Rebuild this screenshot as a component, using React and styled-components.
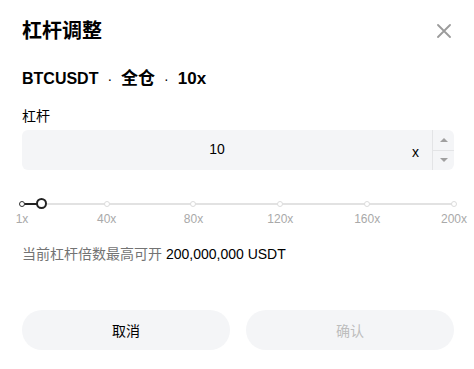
import React, { useState } from "react";
import styled, { createGlobalStyle } from "styled-components";

const GlobalStyle = createGlobalStyle`
  html, body {
    margin: 0;
    padding: 0;
    background: #fff;
  }
  body {
    font-family: "Liberation Sans", "Noto Sans CJK SC", sans-serif;
    color: #000;
  }
`;

const Modal = styled.div`
  width: 474px;
  box-sizing: border-box;
  padding: 17px 20px 0 22px;
`;

const Header = styled.div`
  display: flex;
  align-items: center;
  justify-content: space-between;
  height: 28px;
`;

const Title = styled.h2`
  margin: 0;
  font-size: 20px;
  line-height: 28px;
  font-weight: 700;
`;

const CloseBtn = styled.button`
  border: 0;
  background: none;
  padding: 0;
  width: 16px;
  height: 16px;
  display: flex;
  align-items: center;
  justify-content: center;
  cursor: pointer;
  margin-right: 2px;
`;

const Subtitle = styled.div`
  margin-top: 22px;
  font-size: 16px;
  line-height: 24px;
  font-weight: 700;
  display: flex;
  align-items: center;
  gap: 9px;
`;

const Dot = styled.span`
  font-weight: 400;
  font-size: 14px;
`;

const Lev = styled.span`
  font-size: 17px;
`;

const Label = styled.div`
  margin-top: 15px;
  font-size: 14px;
  line-height: 20px;
`;

const InputBox = styled.div`
  margin-top: 4px;
  height: 40px;
  width: 432px;
  display: flex;
  align-items: stretch;
  background: #f4f5f7;
  border-radius: 6px;
  overflow: hidden;
`;

const NumInput = styled.input`
  flex: 1;
  min-width: 0;
  border: 0;
  outline: 0;
  background: transparent;
  text-align: center;
  font-family: inherit;
  font-size: 14px;
  color: #000;
  padding: 0 0 2px 0;
`;

const Suffix = styled.span`
  display: flex;
  align-items: center;
  font-size: 14px;
  padding: 3px 13px 0 0;
`;

const Stepper = styled.div`
  width: 21px;
  display: flex;
  flex-direction: column;
  border-left: 1px solid #e3e4e6;
`;

const StepBtn = styled.button`
  flex: 1;
  border: 0;
  background: none;
  padding: 0;
  display: flex;
  align-items: center;
  justify-content: center;
  cursor: pointer;
  & + & {
    border-top: 1px solid #e3e4e6;
  }
`;

const Arrow = styled.span`
  width: 0;
  height: 0;
  border-left: 4px solid transparent;
  border-right: 4px solid transparent;
  ${(p) =>
    p.$up
      ? "border-bottom: 4px solid #a0a0a0;"
      : "border-top: 4px solid #a0a0a0;"}
`;

const SliderWrap = styled.div`
  margin-top: 28px;
  width: 432px;
`;

const Track = styled.div`
  position: relative;
  height: 11px;
`;

const Rail = styled.div`
  position: absolute;
  left: 0;
  right: 0;
  top: 4.5px;
  height: 2px;
  background: #e2e2e2;
`;

const Fill = styled.div`
  position: absolute;
  left: 0;
  top: 4.5px;
  height: 2px;
  background: #222;
`;

const Tick = styled.span`
  position: absolute;
  top: 2.5px;
  width: 6px;
  height: 6px;
  margin-left: -3px;
  box-sizing: border-box;
  border-radius: 50%;
  background: #fff;
  border: 1px solid ${(p) => (p.$active ? "#333" : "#dcdcdc")};
`;

const Thumb = styled.span`
  position: absolute;
  top: 0;
  width: 11px;
  height: 11px;
  margin-left: -5.5px;
  box-sizing: border-box;
  border-radius: 50%;
  background: #fff;
  border: 2px solid #222;
`;

const Marks = styled.div`
  position: relative;
  height: 16px;
  margin-top: 2px;
`;

const Mark = styled.span`
  position: absolute;
  top: 0;
  transform: translateX(-50%);
  font-size: 12px;
  line-height: 16px;
  color: #a9a9a9;
  white-space: nowrap;
`;

const Info = styled.div`
  margin-top: 17px;
  font-size: 14px;
  line-height: 20px;
  color: #737373;
  span {
    color: #000;
  }
`;

const Footer = styled.div`
  margin-top: 46px;
  width: 432px;
  display: grid;
  grid-template-columns: 1fr 1fr;
  gap: 16px;
`;

const Button = styled.button`
  height: 40px;
  border: 0;
  border-radius: 20px;
  background: #f4f5f7;
  font-family: inherit;
  font-size: 14px;
  color: ${(p) => (p.disabled ? "#bdbdbd" : "#000")};
  cursor: ${(p) => (p.disabled ? "not-allowed" : "pointer")};
`;

const MIN = 1;
const MAX = 200;
const marks = [1, 40, 80, 120, 160, 200];
const pct = (v) => ((v - MIN) / (MAX - MIN)) * 100;

export default function App() {
  const [lev, setLev] = useState(10);

  return (
    <>
      <GlobalStyle />
      <Modal>
        <Header>
          <Title>杠杆调整</Title>
          <CloseBtn aria-label="close">
            <svg width="14" height="14" viewBox="0 0 14 14">
              <path
                d="M1 1L13 13M13 1L1 13"
                stroke="#9b9b9b"
                strokeWidth="1.8"
                strokeLinecap="round"
              />
            </svg>
          </CloseBtn>
        </Header>

        <Subtitle>
          <span>BTCUSDT</span>
          <Dot>·</Dot>
          <Lev>全仓</Lev>
          <Dot>·</Dot>
          <Lev>{lev}x</Lev>
        </Subtitle>

        <Label>杠杆</Label>
        <InputBox>
          <NumInput
            value={lev}
            onChange={(e) => setLev(Number(e.target.value) || MIN)}
          />
          <Suffix>x</Suffix>
          <Stepper>
            <StepBtn onClick={() => setLev(Math.min(MAX, lev + 1))}>
              <Arrow $up />
            </StepBtn>
            <StepBtn onClick={() => setLev(Math.max(MIN, lev - 1))}>
              <Arrow />
            </StepBtn>
          </Stepper>
        </InputBox>

        <SliderWrap>
          <Track>
            <Rail />
            <Fill style={{ width: pct(lev) + "%" }} />
            {marks.map((m) => (
              <Tick key={m} $active={m <= lev} style={{ left: pct(m) + "%" }} />
            ))}
            <Thumb style={{ left: pct(lev) + "%" }} />
          </Track>
          <Marks>
            {marks.map((m) => (
              <Mark key={m} style={{ left: pct(m) + "%" }}>
                {m}x
              </Mark>
            ))}
          </Marks>
        </SliderWrap>

        <Info>
          当前杠杆倍数最高可开 <span>200,000,000 USDT</span>
        </Info>

        <Footer>
          <Button>取消</Button>
          <Button disabled>确认</Button>
        </Footer>
      </Modal>
    </>
  );
}
